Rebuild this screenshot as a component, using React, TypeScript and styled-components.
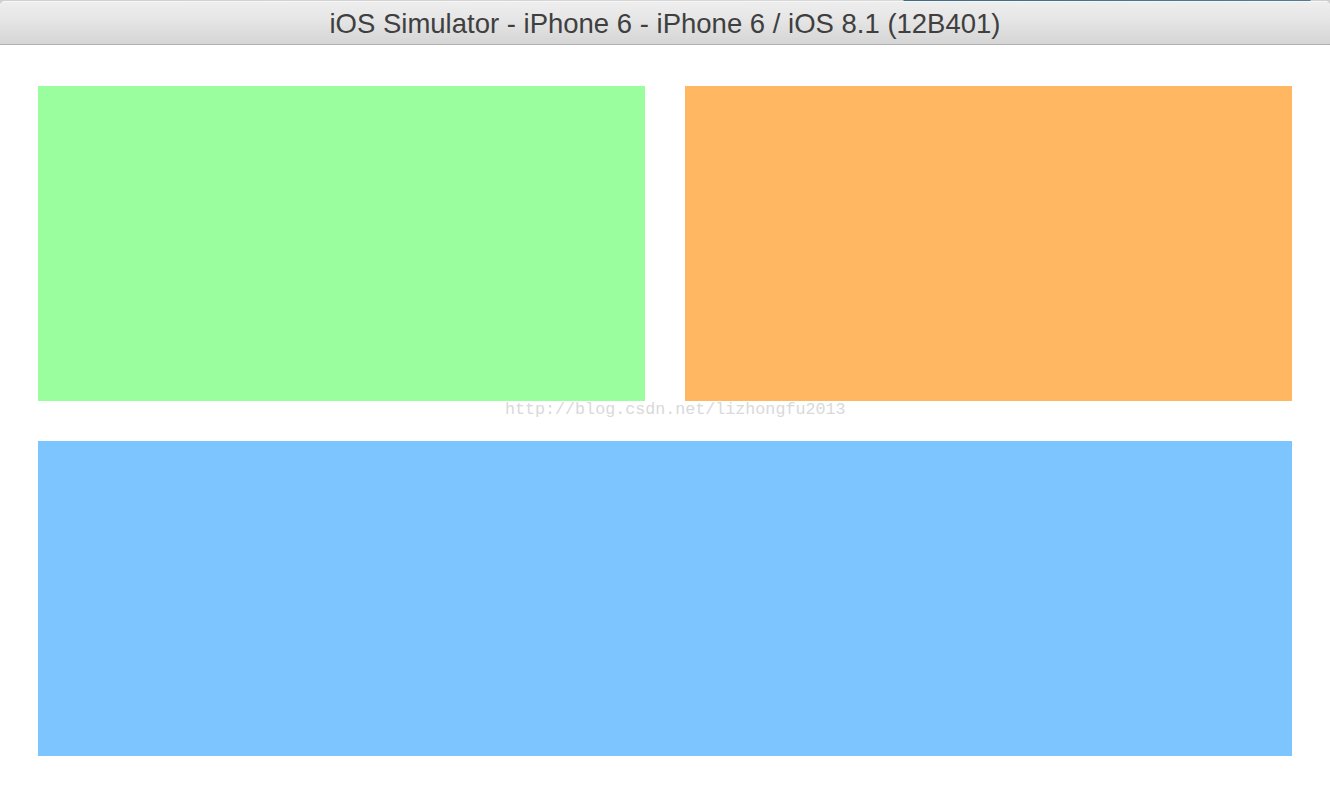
import React from "react";
import styled, { createGlobalStyle } from "styled-components";

const GlobalStyle = createGlobalStyle`
  html, body { margin: 0; padding: 0; background: #ffffff; }
  body { width: 1330px; height: 794px; overflow: hidden; }
  #root { width: 1330px; height: 794px; }
`;

const Desktop = styled.div`
  width: 1330px;
  height: 794px;
  background: linear-gradient(to right, #cfcfcf 0, #d9d9d9 903px, #3f6d82 904px, #4d7f95 1310px, #d0d0d0 1311px);
  padding-top: 1px;
  box-sizing: border-box;
  display: flex;
  flex-direction: column;
`;

const Window = styled.div`
  flex: 1;
  display: flex;
  flex-direction: column;
  background: #ffffff;
  border-radius: 5px 5px 0 0;
  overflow: hidden;
`;

const TitleBar = styled.div`
  height: 40px;
  padding-top: 2px;
  flex-shrink: 0;
  display: flex;
  align-items: center;
  justify-content: center;
  background: linear-gradient(to bottom, #eeeeee 0%, #e6e6e6 40%, #d5d5d5 100%);
  border-top: 1px solid #f6f6f6;
  border-bottom: 1px solid #b1b1b1;
  font-family: "Liberation Sans", Arial, sans-serif;
  font-size: 27.5px;
  color: #3f3f3f;
  box-sizing: content-box;
`;

const Screen = styled.div`
  position: relative;
  flex: 1;
  display: grid;
  grid-template-columns: 1fr 1fr;
  grid-template-rows: 315px 315px;
  column-gap: 40px;
  row-gap: 40px;
  padding: 41px 38px 0 38px;
`;

const ColorBox = styled.div<{ $color: string; $wide?: boolean }>`
  background: ${(p) => p.$color};
  grid-column: ${(p) => (p.$wide ? "1 / span 2" : "auto")};
`;

const Watermark = styled.div`
  position: absolute;
  left: 505px;
  top: 355px;
  font-family: "Liberation Mono", "Courier New", monospace;
  font-size: 16.7px;
  line-height: 20px;
  color: #d9d9d9;
  white-space: nowrap;
  pointer-events: none;
`;

export default function App() {
  return (
    <>
      <GlobalStyle />
      <Desktop>
        <Window>
          <TitleBar>iOS Simulator - iPhone 6 - iPhone 6 / iOS 8.1 (12B401)</TitleBar>
          <Screen>
            <ColorBox $color="#9afe9f" />
            <ColorBox $color="#ffb861" />
            <ColorBox $color="#7cc5fe" $wide />
            <Watermark>http://blog.csdn.net/lizhongfu2013</Watermark>
          </Screen>
        </Window>
      </Desktop>
    </>
  );
}
